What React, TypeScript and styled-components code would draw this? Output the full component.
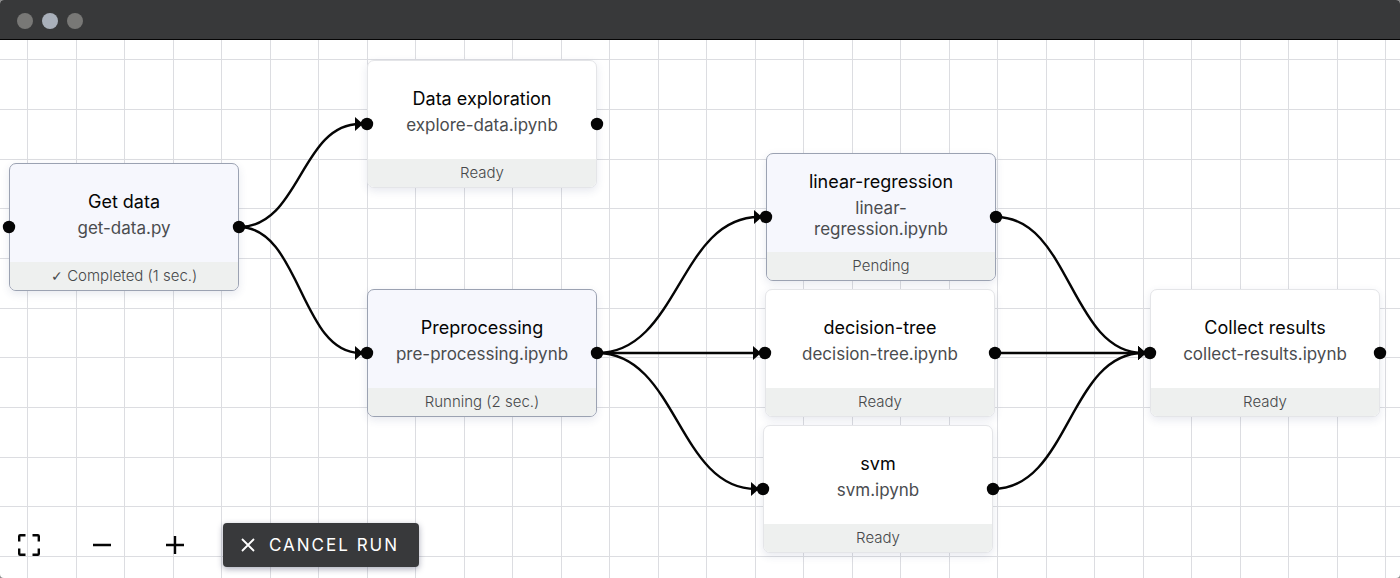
import React from "react";
import styled, { createGlobalStyle } from "styled-components";

type Point = { x: number; y: number };
type PipelineTask = Point & {
  id: string;
  title: string;
  file: string;
  status: string;
  done?: boolean;
  active?: boolean;
};

const NODE_WIDTH = 230;
const NODE_HEIGHT = 128;

const tasks: PipelineTask[] = [
  { id: "get", x: 9, y: 123, title: "Get data", file: "get-data.py", status: "Completed (1 sec.)", done: true, active: true },
  { id: "explore", x: 367, y: 20, title: "Data exploration", file: "explore-data.ipynb", status: "Ready" },
  { id: "prep", x: 367, y: 249, title: "Preprocessing", file: "pre-processing.ipynb", status: "Running (2 sec.)", active: true },
  { id: "linear", x: 766, y: 113, title: "linear-regression", file: "linear-regression.ipynb", status: "Pending", active: true },
  { id: "tree", x: 765, y: 249, title: "decision-tree", file: "decision-tree.ipynb", status: "Ready" },
  { id: "svm", x: 763, y: 385, title: "svm", file: "svm.ipynb", status: "Ready" },
  { id: "collect", x: 1150, y: 249, title: "Collect results", file: "collect-results.ipynb", status: "Ready" },
];

const links: [string, string][] = [
  ["get", "explore"],
  ["get", "prep"],
  ["prep", "linear"],
  ["prep", "tree"],
  ["prep", "svm"],
  ["linear", "collect"],
  ["tree", "collect"],
  ["svm", "collect"],
];

const GlobalStyle = createGlobalStyle`
  * { box-sizing: border-box; }
  html { background: #8c8c8c; }
  body { margin: 0; font-family: Inter, "Liberation Sans", "DejaVu Sans", sans-serif; }
`;

const Window = styled.div`
  display: flex;
  flex-direction: column;
  min-height: 100vh;
  overflow: hidden;
  border-radius: 4px;
  background: #ffffff;
`;

const TitleBar = styled.header`
  display: flex;
  align-items: center;
  gap: 9px;
  height: 40px;
  padding: 3px 17px 0;
  background: #38393a;
  border-bottom: 1px solid #050505;
`;

const WindowDot = styled.span<{ $light?: boolean }>`
  width: 16px;
  height: 16px;
  border-radius: 50%;
  background: ${(p) => (p.$light ? "#a9b0ba" : "#787876")};
`;

const Canvas = styled.main`
  position: relative;
  display: flex;
  flex: 1;
  flex-direction: column;
  justify-content: flex-end;
  overflow: hidden;
`;

const Layer = styled.svg`
  position: absolute;
  inset: 0;
  width: 100%;
  height: 100%;
`;

const TaskCard = styled.article<{ $at: Point; $active?: boolean }>`
  position: absolute;
  left: ${(p) => p.$at.x}px;
  top: ${(p) => p.$at.y}px;
  display: flex;
  flex-direction: column;
  width: ${NODE_WIDTH}px;
  height: ${NODE_HEIGHT}px;
  overflow: hidden;
  border: 1px solid ${(p) => (p.$active ? "#9ba2b2" : "#e4e5e8")};
  border-radius: 7px;
  background: ${(p) => (p.$active ? "#f6f7fd" : "#ffffff")};
  box-shadow: 0 3px 8px rgba(60, 70, 120, 0.12);
  text-align: center;
`;

const TaskBody = styled.div`
  display: flex;
  flex: 1;
  flex-direction: column;
  justify-content: center;
  gap: 4px;
  padding: 3px 27px 0;
`;

const TaskTitle = styled.h2`
  margin: 0;
  font-size: 18px;
  font-weight: 400;
  line-height: 24px;
  color: #050505;
`;

const TaskFile = styled.p`
  margin: 0;
  font-size: 17px;
  line-height: 21px;
  color: #4a4c4f;
`;

const TaskStatus = styled.footer`
  height: 28px;
  font-size: 15px;
  font-weight: 300;
  line-height: 27px;
  color: #46484a;
  background: #eef0ef;
`;

const DoneMark = styled.span`
  font-family: "DejaVu Sans", sans-serif;
  font-size: 14px;
`;

const Toolbar = styled.div`
  position: relative;
  display: flex;
  align-items: center;
  gap: 24px;
  padding: 0 4px 11px;
`;

const IconButton = styled.button`
  display: grid;
  place-items: center;
  width: 49px;
  height: 44px;
  padding: 0;
  border: 0;
  background: none;
  color: #050505;
`;

const CancelButton = styled.button`
  display: flex;
  align-items: center;
  gap: 14px;
  height: 44px;
  padding: 0 20px 0 18px;
  border: 0;
  border-radius: 4px;
  background: #38393b;
  box-shadow: 0 2px 6px rgba(40, 45, 80, 0.4);
  color: #ffffff;
  font-family: inherit;
  font-size: 17px;
  line-height: 24px;
  letter-spacing: 2px;
  text-transform: uppercase;
`;

function Grid() {
  const columns = Array.from({ length: 80 }, (_, i) => Math.floor(27.6 + i * 48.5));
  const rows = Array.from({ length: 40 }, (_, i) => Math.floor(19.6 + i * 49.7));
  return (
    <Layer aria-hidden="true" fill="#dcdde1">
      {columns.map((x) => (
        <rect key={`c${x}`} x={x} y="0" width="1" height="100%" />
      ))}
      {rows.map((y) => (
        <rect key={`r${y}`} x="0" y={y} width="100%" height="1" />
      ))}
    </Layer>
  );
}

function Links() {
  const find = (id: string) => tasks.find((t) => t.id === id)!;
  return (
    <Layer aria-hidden="true">
      {links.map(([from, to]) => {
        const a = find(from);
        const b = find(to);
        const x1 = a.x + NODE_WIDTH;
        const y1 = a.y + NODE_HEIGHT / 2;
        const x2 = b.x - 5;
        const y2 = b.y + NODE_HEIGHT / 2;
        const mid = (x1 + x2) / 2;
        return (
          <g key={`${from}-${to}`}>
            <path
              d={`M${x1},${y1} C${mid},${y1} ${mid},${y2} ${x2 - 2},${y2}`}
              fill="none"
              stroke="#050505"
              strokeWidth="2.4"
            />
            <path d={`M${x2 - 7},${y2 - 7} L${x2 + 1},${y2} L${x2 - 7},${y2 + 7} Z`} fill="#050505" />
          </g>
        );
      })}
    </Layer>
  );
}

function Ports() {
  return (
    <Layer aria-hidden="true" fill="#050505" pointerEvents="none">
      {tasks.map((t) => (
        <g key={t.id}>
          <circle cx={t.x} cy={t.y + NODE_HEIGHT / 2} r="6.2" />
          <circle cx={t.x + NODE_WIDTH} cy={t.y + NODE_HEIGHT / 2} r="6.2" />
        </g>
      ))}
    </Layer>
  );
}

export default function App() {
  return (
    <>
      <GlobalStyle />
      <Window>
        <TitleBar>
          <WindowDot />
          <WindowDot $light />
          <WindowDot />
        </TitleBar>
        <Canvas>
          <Grid />
          <Links />
          {tasks.map((t) => (
            <TaskCard key={t.id} $at={t} $active={t.active}>
              <TaskBody>
                <TaskTitle>{t.title}</TaskTitle>
                <TaskFile>{t.file}</TaskFile>
              </TaskBody>
              <TaskStatus>
                {t.done && <DoneMark>✓ </DoneMark>}
                {t.status}
              </TaskStatus>
            </TaskCard>
          ))}
          <Ports />
          <Toolbar>
            <IconButton type="button" aria-label="Fit to screen">
              <svg width="24" height="24" viewBox="0 0 24 24" fill="none" stroke="currentColor" strokeWidth="2.4">
                <path d="M2.2 8.5V3.2Q2.2 2.2 3.2 2.2H8.5M15.5 2.2H20.8Q21.8 2.2 21.8 3.2V8.5M21.8 15.5V20.8Q21.8 21.8 20.8 21.8H15.5M8.5 21.8H3.2Q2.2 21.8 2.2 20.8V15.5" />
              </svg>
            </IconButton>
            <IconButton type="button" aria-label="Zoom out">
              <svg width="24" height="24" viewBox="0 0 24 24" fill="none" stroke="currentColor" strokeWidth="2.4">
                <path d="M3 12H21" />
              </svg>
            </IconButton>
            <IconButton type="button" aria-label="Zoom in">
              <svg width="24" height="24" viewBox="0 0 24 24" fill="none" stroke="currentColor" strokeWidth="2.4">
                <path d="M3 12H21M12 3V21" />
              </svg>
            </IconButton>
            <CancelButton type="button">
              <svg width="14" height="14" viewBox="0 0 14 14" fill="none" stroke="currentColor" strokeWidth="1.8" aria-hidden="true">
                <path d="M1 1L13 13M13 1L1 13" />
              </svg>
              Cancel run
            </CancelButton>
          </Toolbar>
        </Canvas>
      </Window>
    </>
  );
}
